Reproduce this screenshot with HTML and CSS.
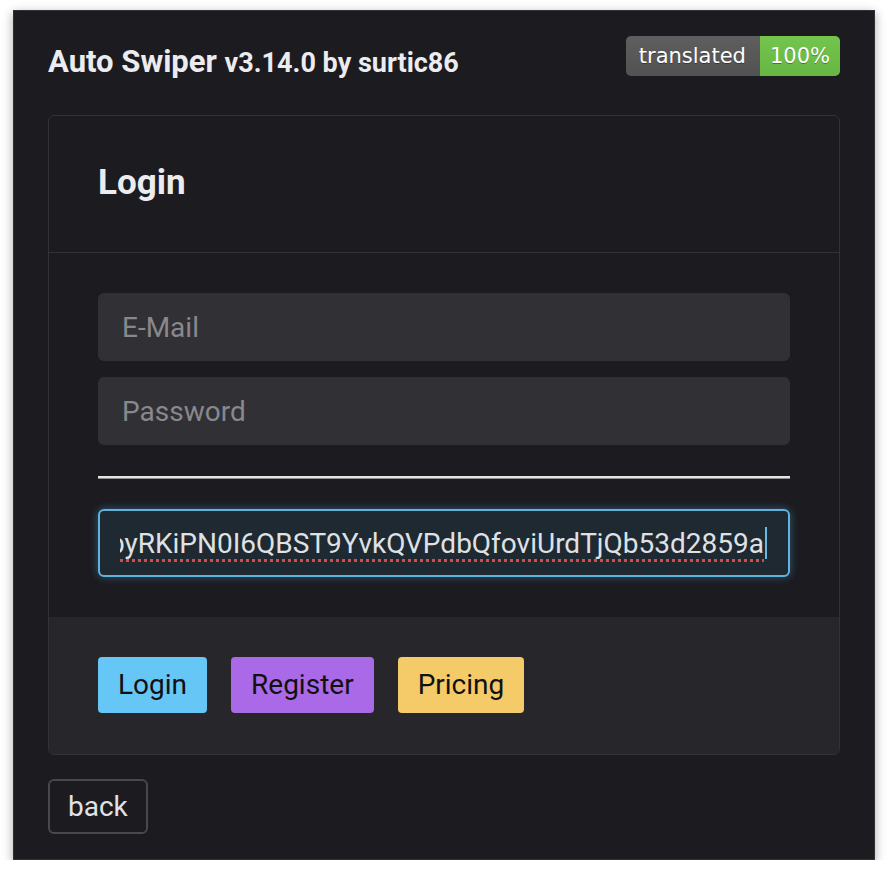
FILE: index.html
```html
<!DOCTYPE html>
<html>
<head>
<meta charset="utf-8">
<link rel="stylesheet" href="styles.css">
</head>
<body>
<div class="window">
  <div class="top">
    <h1 class="title">Auto Swiper <small>v3.14.0 by surtic86</small></h1>
    <div class="badge"><span class="b-label">translated</span><span class="b-value">100%</span></div>
  </div>
  <div class="card">
    <div class="card-head"><h2>Login</h2></div>
    <div class="card-body">
      <div class="field placeholder">E-Mail</div>
      <div class="field placeholder">Password</div>
      <div class="sep"></div>
      <div class="field token"><div class="clip"><span class="tok">byRKiPN0I6QBST9YvkQVPdbQfoviUrdTjQb53d2859a</span><span class="caret"></span></div></div>
    </div>
    <div class="card-foot">
      <button class="btn btn-login">Login</button>
      <button class="btn btn-register">Register</button>
      <button class="btn btn-pricing">Pricing</button>
    </div>
  </div>
  <button class="back">back</button>
</div>
</body>
</html>
```

FILE: styles.css
```css
* { box-sizing: border-box; }
body {
  margin: 0;
  background: #ffffff;
  font-family: Roboto, "Liberation Sans", sans-serif;
}
.window {
  width: 862px;
  margin: 10px 0 0 13px;
  background: #1b1b20;
  border: 1px solid #303035;
  padding: 25px 34px 25px 34px;
  box-shadow: 0 3px 10px rgba(0,0,0,0.35);
  color: #e8e8ec;
}
.top {
  display: flex;
  justify-content: space-between;
  align-items: flex-start;
}
.title {
  margin: 0;
  padding-top: 6px;
  font-size: 31px;
  line-height: 40px;
  font-weight: 700;
  color: #ececf0;
}
.title small {
  font-size: 27px;
  font-weight: 700;
}
.badge {
  display: flex;
  height: 40px;
  border-radius: 5px;
  overflow: hidden;
  font-family: "DejaVu Sans", Verdana, sans-serif;
  font-size: 21px;
  line-height: 40px;
  color: #fff;
  text-shadow: 0 1px 0 rgba(0,0,0,0.35);
}
.b-label {
  background: linear-gradient(#5e5e5e, #525252);
  padding: 0 14px 0 13px;
}
.b-value {
  background: linear-gradient(#74c44e, #66b843);
  padding: 0 10px 0 10px;
}
.card {
  margin-top: 32px;
  border: 1px solid #323238;
  border-radius: 6px;
  overflow: hidden;
  background: #1b1b20;
}
.card-head {
  padding: 45px 49px 47px;
  border-bottom: 1px solid #323238;
}
.card-head h2 {
  margin: 0;
  font-size: 35px;
  line-height: 44px;
  font-weight: 700;
  color: #ececf0;
}
.card-body {
  padding: 40px 49px;
  display: flex;
  flex-direction: column;
}
.field {
  height: 68px;
  border-radius: 6px;
  background: #313135;
  padding: 0 24px;
  font-size: 28px;
  display: flex;
  align-items: center;
}
.field + .field { margin-top: 16px; }
.placeholder { color: #88888d; }
.sep {
  margin: 31px 0 30px;
  height: 3px;
  border-top: 2px solid #e4e4e4;
  border-bottom: 1px solid #8d8d8d;
}
.field.token {
  margin-top: 0;
  background: #1f2931;
  border: 2px solid #5fb3de;
  box-shadow: 0 0 9px rgba(86,170,220,0.45);
  padding: 0 21px 0 20px;
  color: #dfe1e4;
}
.clip {
  flex: 1;
  display: flex;
  justify-content: flex-end;
  align-items: center;
  overflow: hidden;
  white-space: nowrap;
  height: 100%;
}
.tok {
  text-decoration: underline dotted #d0504c;
  text-decoration-thickness: 3px;
  text-underline-offset: 6px;
}
.caret {
  width: 2px;
  height: 32px;
  background: #6ab8e6;
  margin-left: 1px;
  flex: none;
}
.card-foot {
  background: #27272b;
  padding: 40px 49px 41px;
  display: flex;
  gap: 24px;
}
.btn {
  border: none;
  border-radius: 4px;
  font-family: Roboto, "Liberation Sans", sans-serif;
  font-size: 28px;
  line-height: 42px;
  padding: 7px 20px;
  color: #111;
  cursor: pointer;
}
.btn-login { background: #66c6f5; }
.btn-register { background: #aa69e6; }
.btn-pricing { background: #f5ca69; }
.back {
  margin-top: 24px;
  background: transparent;
  border: 2px solid #48484d;
  border-radius: 6px;
  color: #e2e2e6;
  font-family: Roboto, "Liberation Sans", sans-serif;
  font-size: 28px;
  line-height: 41px;
  padding: 5px 18px;
  display: block;
}
```
